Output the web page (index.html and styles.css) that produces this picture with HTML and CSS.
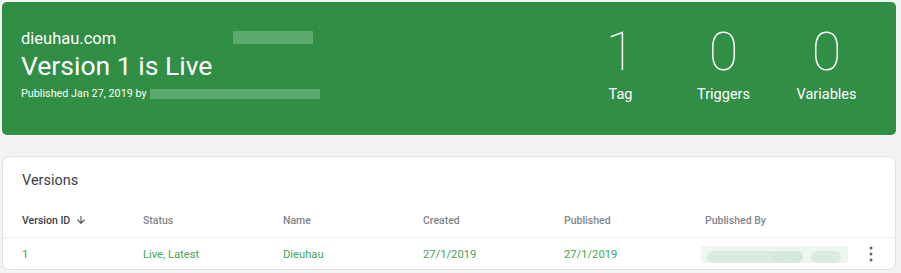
FILE: index.html
```html
<!DOCTYPE html>
<html>
<head>
<meta charset="utf-8">
<link rel="stylesheet" href="styles.css">
</head>
<body>
<div class="page">
  <section class="live-card">
    <div class="live-info">
      <div class="domain">dieuhau.com<span class="blur blur-top"></span></div>
      <div class="live-title">Version 1 is Live</div>
      <div class="published">Published Jan 27, 2019 by<span class="blur blur-by"></span></div>
    </div>
    <div class="stats">
      <div class="stat"><div class="stat-num">1</div><div class="stat-label">Tag</div></div>
      <div class="stat"><div class="stat-num">0</div><div class="stat-label">Triggers</div></div>
      <div class="stat"><div class="stat-num">0</div><div class="stat-label">Variables</div></div>
    </div>
  </section>

  <section class="versions-card">
    <div class="versions-title">Versions</div>
    <div class="table">
      <div class="row head">
        <div class="cell sorted">Version ID
          <svg class="sort-icon" viewBox="0 0 24 24" width="12" height="12"><path d="M20 12l-1.41-1.41L13 16.17V4h-2v12.17l-5.58-5.59L4 12l8 8 8-8z" fill="#3c4043"/></svg>
        </div>
        <div class="cell">Status</div>
        <div class="cell">Name</div>
        <div class="cell">Created</div>
        <div class="cell">Published</div>
        <div class="cell">Published By</div>
        <div class="cell"></div>
      </div>
      <div class="row body">
        <div class="cell">1</div>
        <div class="cell">Live, Latest</div>
        <div class="cell">Dieuhau</div>
        <div class="cell">27/1/2019</div>
        <div class="cell">27/1/2019</div>
        <div class="cell"><span class="blur-row"><span class="blob b1"></span><span class="blob b2"></span><span class="blob b3"></span></span></div>
        <div class="cell menu">
          <svg viewBox="0 0 4 16" width="4" height="16"><circle cx="2" cy="2" r="1.5" fill="#5f6368"/><circle cx="2" cy="8" r="1.5" fill="#5f6368"/><circle cx="2" cy="14" r="1.5" fill="#5f6368"/></svg>
        </div>
      </div>
    </div>
  </section>
</div>
</body>
</html>
```

FILE: styles.css
```css
* { box-sizing: border-box; }
html, body { margin: 0; padding: 0; }
body {
  background: #f1f3f4;
  font-family: Roboto, "Liberation Sans", Arial, sans-serif;
  width: 901px;
  height: 273px;
  overflow: hidden;
}
.page {
  padding: 2px 5px 0 2px;
  display: flex;
  flex-direction: column;
  gap: 21px;
}
.live-card {
  background: #308e45;
  border-radius: 5px;
  height: 133px;
  display: flex;
  justify-content: space-between;
  color: #fff;
  padding: 0 18px 0 19px;
}
.live-info { padding-top: 27px; }
.domain {
  font-size: 16.5px;
  line-height: 20px;
  height: 20px;
  display: flex;
  align-items: center;
}
.blur {
  display: inline-block;
  background: #62ad72;
  opacity: 0.9;
}
.blur-top { width: 80px; height: 13px; margin-left: 117px; margin-top: -4px; }
.live-title {
  font-size: 26.5px;
  line-height: 32px;
  margin-top: 1px;
}
.published {
  font-size: 10.8px;
  line-height: 16px;
  margin-top: 4px;
  display: flex;
  align-items: center;
}
.blur-by { width: 170px; height: 10px; margin-left: 3px; }
.stats {
  display: flex;
  padding-top: 21px;
}
.stat {
  width: 103px;
  display: flex;
  flex-direction: column;
  align-items: center;
}
.stat-num {
  font-size: 54px;
  font-weight: 100;
  line-height: 58px;
}
.stat-label {
  font-size: 14.5px;
  line-height: 18px;
  margin-top: 5px;
}
.versions-card {
  background: #fff;
  border: 1px solid #dfe1e4;
  border-radius: 7px;
  height: 114px;
  padding-top: 14px;
}
.versions-title {
  font-size: 14.5px;
  line-height: 20px;
  color: #3c4043;
  padding-left: 19px;
  margin-bottom: 12px;
}
.row {
  display: grid;
  grid-template-columns: 121px 140px 140px 141px 141px 1fr 26px;
  padding-left: 19px;
  align-items: center;
}
.row.head {
  height: 35px;
  font-size: 10.5px;
  font-weight: 500;
  color: #80868b;
  border-bottom: 1px solid #eceef0;
}
.cell.sorted {
  color: #3c4043;
  display: flex;
  align-items: center;
  gap: 5px;
}
.sort-icon { display: block; }
.row.body {
  height: 32px;
  font-size: 11.2px;
  color: #43a35a;
}
.blur-row {
  display: block;
  position: relative;
  width: 147px;
  height: 17px;
  margin-left: -4px;
  background: #eef6f0;
  border-radius: 3px;
  overflow: hidden;
}
.blob {
  position: absolute;
  top: 5px;
  height: 12px;
  background: #d9ecde;
  border-radius: 6px;
}
.b1 { left: 6px; width: 72px; }
.b2 { left: 72px; width: 30px; background: #d3e9d9; }
.b3 { left: 110px; width: 30px; }
.cell.menu {
  display: flex;
  justify-content: flex-start;
}
.cell.menu svg { display: block; }
```
